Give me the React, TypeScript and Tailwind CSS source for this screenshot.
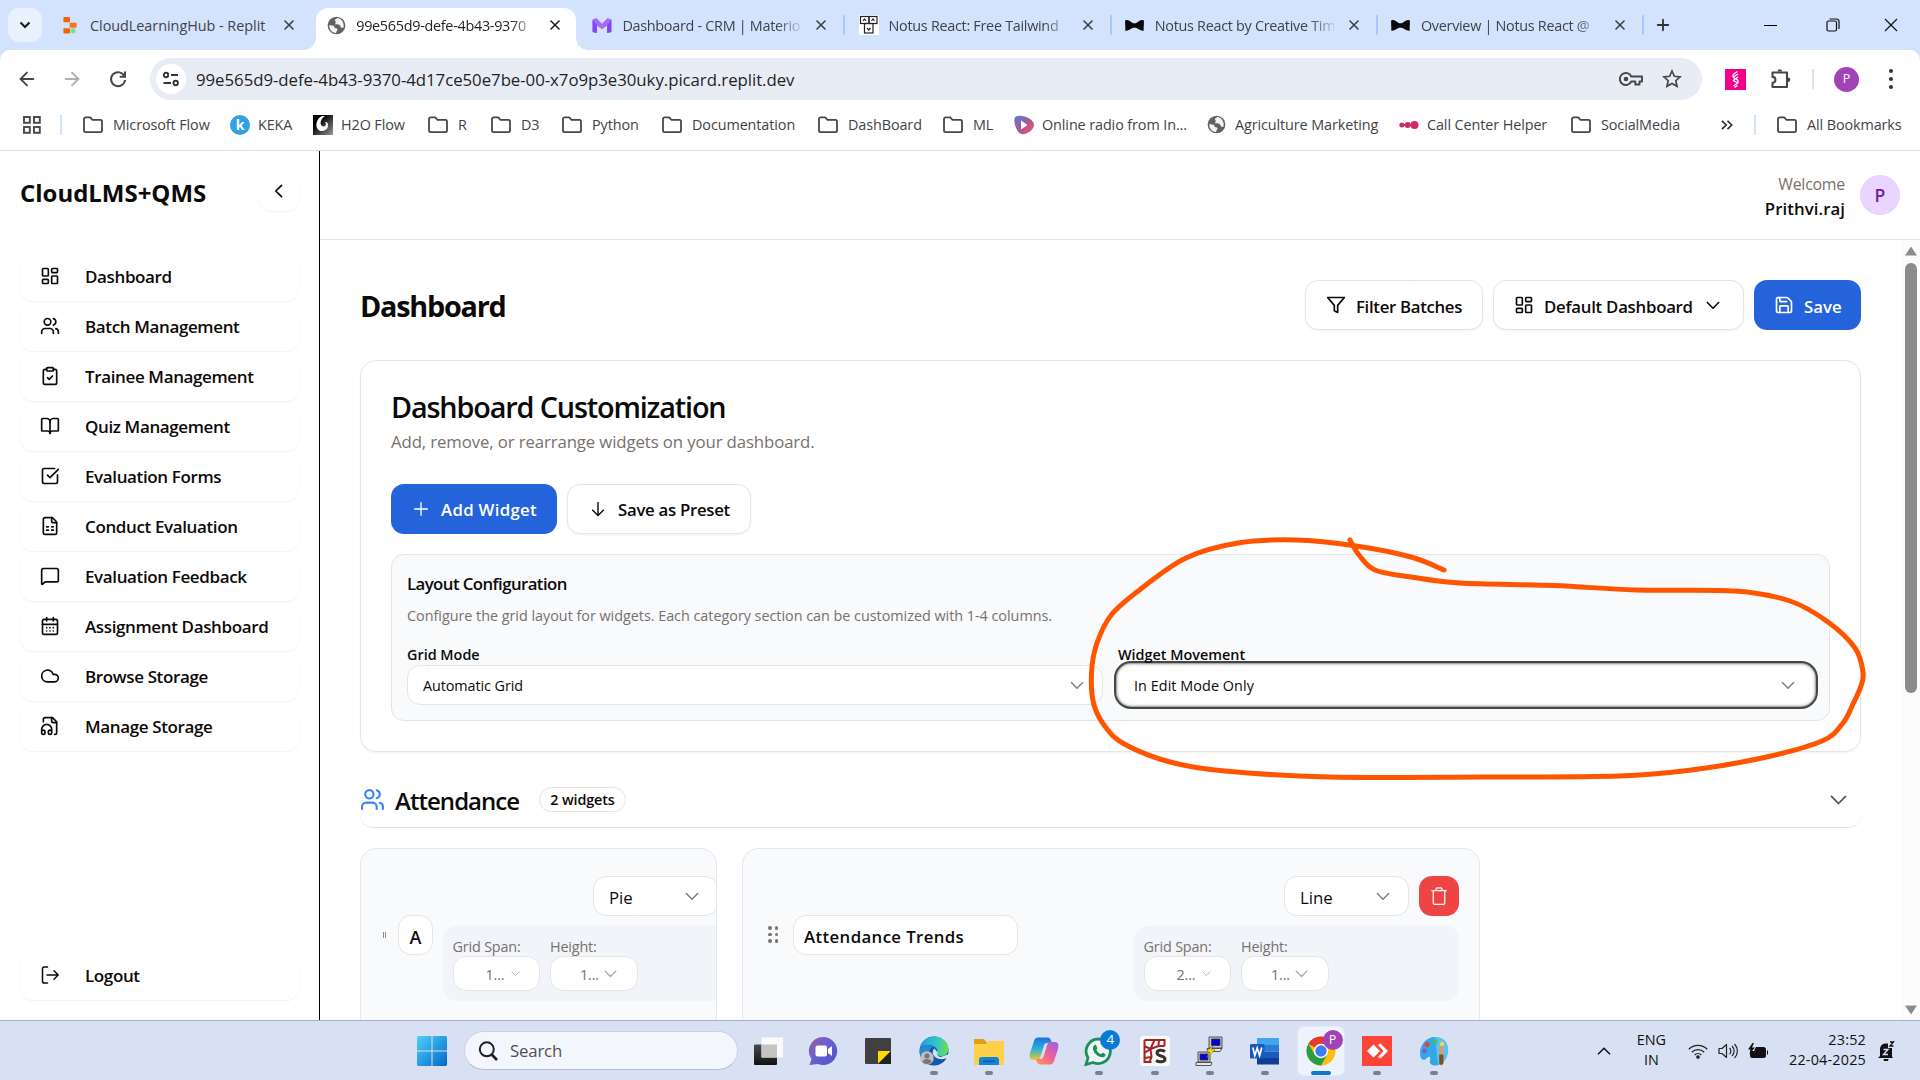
import React from "react";
import {
  ArrowLeft, ArrowRight, BookOpen, CalendarDays, ClipboardCheck, Cloud, FileSpreadsheet,
  LayoutDashboard, MessageSquare, SquareCheckBig, Users, X, Plus,
} from "lucide-react";

/* ---------- shared small icons ---------- */

const Chevron = ({ className = "" }: { className?: string }) => (
  <svg viewBox="0 0 15 15" fill="none" className={className}>
    <path d="M3.3 5.6L7.5 9.9l4.2-4.3" stroke="currentColor" strokeWidth="1.05" strokeLinecap="round" strokeLinejoin="round" />
  </svg>
);

const Folder = () => (
  <svg viewBox="0 0 22 20" className="h-5 w-[22px] shrink-0" fill="none" stroke="#474747" strokeWidth="1.8" strokeLinejoin="round">
    <path d="M2 15.5V4a1.6 1.6 0 0 1 1.6-1.6h4.6l2.3 2.4h7.9A1.6 1.6 0 0 1 20 6.400v9.100a1.600 1.600 0 0 1-1.600 1.600H3.600A1.600 1.600 0 0 1 2 15.500z" />
  </svg>
);

const Globe = ({ className = "" }: { className?: string }) => (
  <svg viewBox="0 0 20 20" className={className}>
    <circle cx="10" cy="10" r="9.300" fill="#5f6368" />
    <path d="M2.500 9.500l5 1 .6 2 2.400.6c1 .8.5 2-.6 3.200l-.4 1.600C5 17.500 2 14 2.500 9.500zM11.500 2.200C8.500 3 7.600 4.600 8.800 5.600c1.400.9-.6 2-.2 3.200 2 .6 4.600-.3 5.400 1.600.5 1.600 1.600 2.600 3.400 1.800C18.500 8 15.500 3.200 11.500 2.200z" fill="#fff" opacity=".92" />
  </svg>
);

const BowTie = () => (
  <svg viewBox="0 0 20 14" className="h-[13px] w-[19px]">
    <path d="M0 1.500C3 0 6 3.200 8.500 4.500h3C14 3.200 17 0 20 1.500c.5 3-.5 8 0 11-3 1-6-2-8.500-3h-3C6 10.500 3 13.500 0 12.500c.5-3-.5-8 0-11z" fill="#0a0a0a" />
  </svg>
);

/* ---------- browser chrome ---------- */

const Replit = () => (
  <svg viewBox="0 0 14 18" className="h-[17px] w-[14px]">
    <rect x="0" y="0" width="7" height="5.500" rx="1" fill="#f26207" />
    <rect x="6.500" y="6" width="7.500" height="5.500" rx="1" fill="#f97316" />
    <rect x="0" y="12" width="7" height="5.500" rx="1" fill="#f26207" />
    <circle cx="10.200" cy="14.500" r="2.700" fill="#6ee787" />
  </svg>
);

const Materio = () => (
  <svg viewBox="0 0 20 16" className="h-[15px] w-[20px]">
    <path d="M0 1.500L4 0l6 6 6-6 4 1.500V15l-4.500 1V8L10 12 4.500 8v8L0 15z" fill="#a56bff" />
    <path d="M0 1.500L4.500 8v8L0 15zM20 1.500L15.500 8v8l4.500-1z" fill="#8344f5" />
  </svg>
);

const Flowbox = () => (
  <svg viewBox="0 0 20 20" className="size-5 bg-white" fill="none" stroke="#222" strokeWidth="1.200">
    <rect x="1.500" y="1.500" width="8.500" height="7" /><rect x="10" y="1.500" width="8" height="7" />
    <rect x="5.500" y="8.500" width="8.500" height="9.500" />
    <path d="M4 6l1.500-2L7 6M12.500 6L14 4l1.500 2M8 13l1.800 2 1.700-2" />
  </svg>
);

type Tab = { label: string; icon: React.ReactNode; active?: boolean; sep?: boolean; cut?: boolean };
const tabs: Tab[] = [
  { label: "CloudLearningHub - Replit", icon: <Replit /> },
  { label: "99e565d9-defe-4b43-9370", icon: <Globe className="size-[19px]" />, active: true, cut: true },
  { label: "Dashboard - CRM | Materio", icon: <Materio />, sep: true, cut: true },
  { label: "Notus React: Free Tailwind", icon: <Flowbox />, sep: true, cut: true },
  { label: "Notus React by Creative Tim", icon: <BowTie />, sep: true, cut: true },
  { label: "Overview | Notus React @", icon: <BowTie />, sep: true, cut: true },
];

function TabStrip() {
  return (
    <div className="flex h-[50px] items-center bg-[#d3e2fd]">
      <div className="ml-2 mr-2 flex h-[34px] w-[34px] items-center justify-center rounded-[11px] bg-[#e9f0fe]">
        <svg viewBox="0 0 12 8" className="h-2 w-3"><path d="M1.500 1.500L6 6l4.500-4.500" fill="none" stroke="#1f1f1f" strokeWidth="2.200" /></svg>
      </div>
      {tabs.map((t) => (
        <div key={t.label} className="relative h-full w-[266.2px] shrink-0">
          {t.active && (
            <>
              <div className="absolute bottom-0 left-0 top-2 w-[260px] rounded-t-[12px] bg-white" />
              <div className="absolute -left-[12px] bottom-0 size-3 bg-[radial-gradient(circle_at_0_0,transparent_11.5px,#fff_12px)]" />
              <div className="absolute bottom-0 left-[260px] size-3 bg-[radial-gradient(circle_at_100%_0,transparent_11.5px,#fff_12px)]" />
            </>
          )}
          <div className="relative flex h-full items-center">
            <div className="ml-[10px] flex w-5 justify-center">{t.icon}</div>
            <div
              className={`ml-[10px] w-[179px] whitespace-nowrap pt-px text-[14.4px] ${t.active ? "text-[#1f1f1f]" : "text-[#3f4349]"} ${t.cut ? "tracking-[-0.02em] [mask-image:linear-gradient(to_right,#000_155px,rgba(0,0,0,0.15)_178px)]" : "tracking-[-0.002em]"}`}
            >
              {t.label}
            </div>
            <X className="ml-[12px] size-4" strokeWidth={2.4} color={t.active ? "#1f1f1f" : "#3c4043"} />
            {t.sep && <div className="ml-[14px] h-5 w-[2px] rounded bg-[#a8c7fa]" />}
          </div>
        </div>
      ))}
      <Plus className="ml-[7px] size-[18px]" strokeWidth={2.4} color="#333" />
      <div className="ml-auto flex items-center">
        <div className="mr-[49px] h-px w-[13px] bg-black" />
        <svg viewBox="0 0 14 14" className="mr-[44px] size-[14px]" fill="none" stroke="#111" strokeWidth="1.200">
          <rect x="1" y="3" width="9.500" height="10" rx="1.500" /><path d="M3.500 1h7a2.500 2.500 0 0 1 2.500 2.500v7.500" />
        </svg>
        <svg viewBox="0 0 14 14" className="mr-[22px] size-[14px]" stroke="#111" strokeWidth="1.200"><path d="M1 1l12 12M13 1L1 13" /></svg>
      </div>
    </div>
  );
}

function Toolbar() {
  return (
    <div className="h-[58px] bg-[#d3e2fd]">
      <div className="flex h-full items-center rounded-t-[10px] bg-white">
        <ArrowLeft className="ml-4 size-[22px]" strokeWidth={2} color="#474747" />
        <ArrowRight className="ml-[23px] size-[22px]" strokeWidth={2} color="#b0b0b0" />
        <svg viewBox="0 0 20 20" className="ml-[25px] size-5" fill="none" stroke="#474747" strokeWidth="2">
          <path d="M16.500 7.500A7 7 0 1 0 17 11" /><path d="M17 2.500v5.300h-5.300" />
        </svg>
        <div className="ml-[22px] flex h-[42px] w-[1552px] items-center rounded-full bg-[#e8ecf4]">
          <div className="ml-[6px] flex size-[30px] items-center justify-center rounded-full bg-white">
            <svg viewBox="0 0 18 16" className="h-4 w-[18px]" fill="none" stroke="#333" strokeWidth="1.900">
              <circle cx="4" cy="4" r="2.200" /><path d="M9 4h7M1.500 12H9" /><circle cx="13.700" cy="12" r="2.200" />
            </svg>
          </div>
          <div className="ml-[10px] pt-px text-[16.8px] tracking-[-0.002em] text-[#1f1f1f]">99e565d9-defe-4b43-9370-4d17ce50e7be-00-x7o9p3e30uky.picard.replit.dev</div>
          <svg viewBox="0 0 24 16" className="ml-auto h-4 w-6" fill="none" stroke="#474747" strokeWidth="1.900">
            <path d="M12.300 5.500A6 6 0 1 0 12.300 10.500h4v3h4.200v-3H23V5.500z" strokeLinejoin="round" />
            <circle cx="7" cy="8" r="2.300" fill="#474747" stroke="none" />
          </svg>
          <svg viewBox="0 0 20 20" className="ml-[19px] mr-5 size-5" fill="none" stroke="#474747" strokeWidth="1.700">
            <path d="M10 2l2.350 5.300 5.750.55-4.300 3.850 1.250 5.650L10 14.400l-5.050 2.950L6.200 11.700 1.900 7.850l5.750-.55z" />
          </svg>
        </div>
        <svg viewBox="0 0 21 21" className="ml-[23px] size-[21px] bg-[#f20089]" fill="none" stroke="#fff" strokeWidth="1.300">
          <path d="M12.500 2.500L8 5.500M13 5L8 8.200M8 8.200l5 3M8 5.500v2.700M13 8l-5 3.500M13 11.200v2.600L8.500 17M8 11.500l5 2.300M12.500 16.500L9.500 18.500" />
        </svg>
        <svg viewBox="0 0 22 22" className="ml-6 size-[22px]" fill="none" stroke="#474747" strokeWidth="2.100" strokeLinejoin="round">
          <path d="M2.500 4.500h14.500v14.500H2.500v-4.300a2.900 2.900 0 0 0 0-5.800z" />
          <path d="M7.500 3.500a2.300 2.300 0 0 1 4.600 0zM18 9.500a2.300 2.300 0 0 1 0 4.600z" fill="#474747" stroke="none" />
        </svg>
        <div className="ml-[20px] h-5 w-[2px] bg-[#d3e2fd]" />
        <div className="ml-[20px] flex size-[25px] items-center justify-center rounded-full bg-[#a142b8] text-[12.500px] text-white">P</div>
        <div className="ml-[30px] flex flex-col gap-[4px]">
          <i className="size-1 rounded-full bg-[#333]" /><i className="size-1 rounded-full bg-[#333]" /><i className="size-1 rounded-full bg-[#333]" />
        </div>
      </div>
    </div>
  );
}

const bookmarks: { label: string; w: string; icon?: React.ReactNode; tight?: boolean }[] = [
  { label: "Microsoft Flow", w: "w-[148px]" },
  { label: "KEKA", w: "w-[83px]", tight: true, icon: <span className="flex size-5 items-center justify-center rounded-full bg-[#339fe6] text-[14px] font-bold text-white">k</span> },
  {
    label: "H2O Flow", w: "w-[114px]", tight: true,
    icon: (
      <svg viewBox="0 0 20 20" className="size-5">
        <defs><linearGradient id="h2o" x1="0" y1="0" x2="1" y2="1"><stop offset=".3" stopColor="#000" /><stop offset="1" stopColor="#999" /></linearGradient></defs>
        <rect width="20" height="20" fill="url(#h2o)" />
        <path d="M9 1C3 4 2 11 5 14.500c3 3 9 1.500 10-3 .5-3-1-5-3-4.500 1.500 1.500 1 4.500-1.500 4.500C6 11 7 4 12 1z" fill="#fff" />
      </svg>
    ),
  },
  { label: "R", w: "w-[63px]" },
  { label: "D3", w: "w-[71px]" },
  { label: "Python", w: "w-[100px]" },
  { label: "Documentation", w: "w-[156px]" },
  { label: "DashBoard", w: "w-[125px]" },
  { label: "ML", w: "w-[72px]" },
  {
    label: "Online radio from In...", w: "w-[193px]", tight: true,
    icon: (
      <svg viewBox="0 0 20 20" className="size-5">
        <defs><linearGradient id="radio" x1="0" y1="0" x2="1" y2="1"><stop offset="0" stopColor="#4f7fe0" /><stop offset=".55" stopColor="#b3568f" /><stop offset="1" stopColor="#ff5470" /></linearGradient></defs>
        <path d="M2 1.500C8-1 20 4 20 10S10 21 6 18.500 -2 3.500 2 1.500z" fill="url(#radio)" /><path d="M7 5.500l6.500 4.500L7 14.500z" fill="#fff" />
      </svg>
    ),
  },
  { label: "Agriculture Marketing", w: "w-[192px]", tight: true, icon: <Globe className="mr-px size-[19px]" /> },
  {
    label: "Call Center Helper", w: "w-[171px]", tight: true,
    icon: <svg viewBox="0 0 20 10" className="h-[10px] w-5" fill="#cf2a63"><circle cx="2.800" cy="5" r="2.500" /><circle cx="8.700" cy="5" r="3" /><circle cx="15.500" cy="5" r="4" /><path d="M2 4h13v2H2z" /></svg>,
  },
  { label: "SocialMedia", w: "w-[146px]" },
];

function BookmarkBar() {
  return (
    <div className="flex h-[43px] items-start border-b border-[#dfdfdf] bg-white text-[14.4px] tracking-[-0.007em] text-[#3f4349]">
      <div className="flex h-[34px] w-full items-center">
        <svg viewBox="0 0 18 18" className="ml-[23px] size-[18px]" fill="none" stroke="#474747" strokeWidth="1.900">
          <rect x="1" y="1" width="5.800" height="5.800" /><rect x="11" y="1" width="5.800" height="5.800" /><rect x="1" y="11" width="5.800" height="5.800" /><rect x="11" y="11" width="5.800" height="5.800" />
        </svg>
        <div className="ml-[19px] mr-[20px] h-5 w-[2px] bg-[#d3e2fd]" />
        {bookmarks.map((b) => (
          <div key={b.label} className={`flex shrink-0 items-center whitespace-nowrap ${b.w}`}>
            {b.icon ?? <Folder />}
            <span className={b.tight ? "ml-2" : "ml-[9px]"}>{b.label}</span>
          </div>
        ))}
        <svg viewBox="0 0 12 10" className="ml-[5px] h-[10px] w-3" fill="none" stroke="#333" strokeWidth="1.700"><path d="M1 .8L5.200 5 1 9.200M6.500.8L10.700 5 6.500 9.200" /></svg>
        <div className="ml-[21px] mr-[20px] h-5 w-[2px] bg-[#d3e2fd]" />
        <Folder /><span className="ml-[9px] whitespace-nowrap">All Bookmarks</span>
      </div>
    </div>
  );
}

/* ---------- sidebar ---------- */

const StorageIcon = () => (
  <svg viewBox="0 0 24 24" className="size-5" fill="none" stroke="currentColor" strokeWidth="2" strokeLinecap="round" strokeLinejoin="round">
    <path d="M17.500 22h.5a2 2 0 0 0 2-2V7l-5-5H6a2 2 0 0 0-2 2v3" /><path d="M14 2v4a2 2 0 0 0 2 2h4" />
    <path d="M2 19a2 2 0 1 1 4 0v1a2 2 0 1 1-4 0v-4a6 6 0 0 1 12 0v4a2 2 0 1 1-4 0v-1a2 2 0 1 1 4 0" />
  </svg>
);

const LogoutIcon = () => (
  <svg viewBox="0 0 20 20" className="size-5" fill="none" stroke="currentColor" strokeWidth="1.500" strokeLinecap="round" strokeLinejoin="round">
    <path d="M7.500 2H4.300A1.800 1.800 0 0 0 2.500 3.800v12.400A1.800 1.800 0 0 0 4.300 18h3.200M7 10h11M14 5.800l4.200 4.200L14 14.200" />
  </svg>
);

const nav: [string, React.ReactNode][] = [
  ["Dashboard", <LayoutDashboard className="size-5" />],
  ["Batch Management", <Users className="size-5" />],
  ["Trainee Management", <ClipboardCheck className="size-5" />],
  ["Quiz Management", <BookOpen className="size-5" />],
  ["Evaluation Forms", <SquareCheckBig className="size-5" />],
  ["Conduct Evaluation", <FileSpreadsheet className="size-5" />],
  ["Evaluation Feedback", <MessageSquare className="size-5" />],
  ["Assignment Dashboard", <CalendarDays className="size-5" />],
  ["Browse Storage", <Cloud className="size-5" />],
  ["Manage Storage", <StorageIcon />],
];

const NavItem = ({ label, icon }: { label: string; icon: React.ReactNode }) => (
  <div className="flex h-[50px] items-center rounded-[13px] pl-5 shadow-[0_1px_2px_rgba(0,0,0,0.06)]">
    {icon}
    <span className="ml-[25px] pt-[2px] text-[17px] font-semibold tracking-[-0.022em]">{label}</span>
  </div>
);

function Sidebar() {
  return (
    <aside className="flex h-full w-80 shrink-0 flex-col border-r border-black px-5 pb-5 pt-5">
      <div className="flex h-10 items-center justify-between">
        <span className="pt-[3px] text-[24px] font-bold tracking-[-0.001em]">CloudLMS+QMS</span>
        <div className="flex size-10 items-center justify-center rounded-[13px] shadow-[0_1px_2px_rgba(0,0,0,0.06)]">
          <Chevron className="size-5 rotate-90 [&_path]:[stroke-width:1.3]" />
        </div>
      </div>
      <nav className="mt-10">{nav.map(([l, i]) => <NavItem key={l} label={l} icon={i} />)}</nav>
      <div className="mt-auto"><NavItem label="Logout" icon={<LogoutIcon />} /></div>
    </aside>
  );
}

/* ---------- page content ---------- */

const Btn = ({ children, className = "" }: { children: React.ReactNode; className?: string }) => (
  <div className={`flex h-[50px] items-center rounded-[13px] text-[16.8px] font-semibold ${className}`}>{children}</div>
);
const outline = "border border-[#e7e5e4] bg-white shadow-[0_1px_2px_rgba(0,0,0,0.05)]";
const GridIcon = () => <LayoutDashboard className="size-5" />;

function Configuration() {
  return (
    <section className="mt-[30px] h-[392px] rounded-[16px] border border-[#e7e5e4] px-[30px] pt-[30px] shadow-[0_1px_2px_rgba(0,0,0,0.05)]">
      <h2 className="text-[28.8px] font-semibold leading-8 tracking-[-0.04em]">Dashboard Customization</h2>
      <p className="mt-[6px] text-[16.8px] leading-[25px] tracking-[-0.007em] text-[#78716c]">Add, remove, or rearrange widgets on your dashboard.</p>
      <div className="mt-[30px] flex gap-[10px]">
        <Btn className="w-[166px] bg-[#2563db] pl-5 tracking-[0.018em] text-white">
          <svg viewBox="0 0 20 20" className="size-5" stroke="currentColor" strokeWidth="1.400"><path d="M10 3.200v13.600M3.200 10h13.600" /></svg>
          <span className="ml-[10px] pt-[2px]">Add Widget</span>
        </Btn>
        <Btn className={`w-[184px] pl-5 tracking-[-0.017em] ${outline}`}>
          <svg viewBox="0 0 20 20" className="size-5" fill="none" stroke="currentColor" strokeWidth="1.400"><path d="M10 3v13.500M4.200 10.700l5.800 5.800 5.800-5.800" /></svg>
          <span className="ml-[10px] pt-[2px]">Save as Preset</span>
        </Btn>
      </div>
      <div className="mt-5 rounded-[13px] border border-[#e7e5e4] bg-[#f8fafc] px-[15px] pb-[15px] pt-4">
        <h3 className="text-[16.8px] font-semibold leading-[25px] tracking-[-0.034em]">Layout Configuration</h3>
        <p className="mt-[10px] text-[14.4px] leading-5 tracking-[-0.002em] text-[#78716c]">
          Configure the grid layout for widgets. Each category section can be customized with 1-4 columns.
        </p>
        <div className="mt-[19px] grid grid-cols-2 gap-[15px] text-[14.4px]">
          <div>
            <div className="font-semibold leading-5">Grid Mode</div>
            <div className="flex h-10 items-center justify-between rounded-[13px] border border-[#e7e5e4] bg-white px-[15px]">
              <span className="pt-[2px] tracking-[-0.006em]">Automatic Grid</span><Chevron className="size-5 text-[#7d7d7d]" />
            </div>
          </div>
          <div>
            <div className="font-semibold leading-5">Widget Movement</div>
            <div className="flex h-10 items-center justify-between rounded-[13px] bg-white px-4 shadow-[inset_0_0_2px_1px_#eee,0_0_0_1px_#dcdcdc,0_0_0_2px_#a9a9a9,0_0_0_4px_#444745]">
              <span className="pt-[2px] tracking-[0.004em]">In Edit Mode Only</span><Chevron className="size-5 text-[#7d7d7d]" />
            </div>
          </div>
        </div>
      </div>
    </section>
  );
}

const MiniSelect = ({ label, value, small }: { label: string; value: string; small?: boolean }) => (
  <div className="w-[87.5px] text-[14.4px] tracking-[-0.012em] text-[#78716c]">
    <div className="relative top-px whitespace-nowrap leading-5">{label}</div>
    <div className="flex h-[35px] items-center rounded-[13px] border border-[#e7e5e4] bg-white">
      <span className={small ? "ml-[32px] pt-[2px]" : "ml-[29px] pt-[2px]"}>{value}</span>
      <Chevron className={small ? "ml-[5px] size-[13px] text-[#b5b2b0]" : "ml-[2px] size-[19px] text-[#a8a5a3]"} />
    </div>
  </div>
);

const WidgetControls = ({ span }: { span: string }) => (
  <div className="mt-[10px] flex h-[75px] w-[325px] gap-[10px] rounded-[13px] bg-[#f1f5f9] pl-[9.5px] pt-[10px]">
    <MiniSelect label="Grid Span:" value={span} small />
    <MiniSelect label="Height:" value="1..." />
  </div>
);

const TypeSelect = ({ value }: { value: string }) => (
  <div className="flex h-10 w-[125px] items-center justify-between rounded-[13px] border border-[#e7e5e4] bg-white px-[15px] text-[16.8px]">
    <span className="pt-[3px]">{value}</span><Chevron className="size-5 text-[#7d7d7d]" />
  </div>
);

function Widgets() {
  return (
    <div className="mt-5 flex gap-[25px]">
      <div className="flex h-[400px] w-[357px] items-start overflow-hidden rounded-[16px] border border-[#e2e8f0] bg-[#f8fafc] pt-[27px]">
        <div className="ml-[22px] mt-[56px] flex gap-px"><i className="h-[6px] w-px bg-[#8f8b88]" /><i className="h-[6px] w-px bg-[#8f8b88]" /></div>
        <div className="ml-[12px] mt-[39px] flex h-10 w-[35px] shrink-0 items-center justify-center rounded-[13px] border border-[#e7e5e4] bg-white pt-[4px] text-[18px] font-semibold">A</div>
        <div className="ml-[10px] shrink-0">
          <div className="pl-[150px]"><TypeSelect value="Pie" /></div>
          <WidgetControls span="1..." />
        </div>
      </div>
      <div className="flex h-[400px] w-[738px] items-start rounded-[16px] border border-[#e2e8f0] bg-[#f8fafc] pr-5 pt-[27px]">
        <div className="ml-[25px] mt-[50px] grid grid-cols-2 gap-x-[3px] gap-y-[3px]">
          {[0, 1, 2, 3, 4, 5].map((i) => <i key={i} className="size-[3.500px] rounded-full bg-[#78716c]" />)}
        </div>
        <div className="ml-[15px] mt-[39px] flex h-10 w-[225px] items-center rounded-[13px] border border-[#e7e5e4] bg-white pl-[10px] pt-[3px] text-[16.8px] font-semibold tracking-[0.023em]">Attendance Trends</div>
        <div className="ml-auto">
          <div className="flex justify-end gap-[10px]">
            <TypeSelect value="Line" />
            <div className="flex size-10 items-center justify-center rounded-[13px] bg-[#ef4444]">
              <svg viewBox="0 0 20 20" className="size-5" fill="none" stroke="#fff" strokeWidth="1.300" strokeLinecap="round" strokeLinejoin="round">
                <path d="M2.800 4.700h14.400M7 4.500V3a1.200 1.200 0 0 1 1.200-1.200h3.600A1.200 1.200 0 0 1 13 3v1.500M4.300 4.900v12a1.500 1.500 0 0 0 1.500 1.500h8.400a1.500 1.500 0 0 0 1.500-1.500v-12" />
              </svg>
            </div>
          </div>
          <WidgetControls span="2..." />
        </div>
      </div>
    </div>
  );
}

function Content() {
  return (
    <div className="flex min-h-0 flex-1 overflow-hidden">
      <main className="min-w-0 flex-1 px-10 pt-10">
        <div className="flex items-center">
          <h1 className="mr-auto pt-[2px] text-[28.8px] font-bold tracking-[-0.043em]">Dashboard</h1>
          <Btn className={`mr-[10px] w-[178px] pl-5 tracking-[-0.019em] ${outline}`}>
            <svg viewBox="0 0 24 24" className="size-5" fill="none" stroke="currentColor" strokeWidth="2" strokeLinejoin="round"><path d="M22 3H2l8 9.460V19l4 2v-8.540z" /></svg>
            <span className="ml-[10px] pt-[3px]">Filter Batches</span>
          </Btn>
          <Btn className={`mr-[10px] w-[251px] pl-5 tracking-[-0.015em] ${outline}`}>
            <GridIcon /><span className="ml-[10px] pt-[3px]">Default Dashboard</span><Chevron className="ml-[10px] size-5 [&_path]:[stroke-width:1.2]" />
          </Btn>
          <Btn className="w-[107px] bg-[#2563db] pl-5 text-white">
            <svg viewBox="0 0 24 24" className="size-5" fill="none" stroke="currentColor" strokeWidth="2" strokeLinecap="round" strokeLinejoin="round">
              <path d="M15.200 3a2 2 0 0 1 1.400.6l3.800 3.800a2 2 0 0 1 .6 1.400V19a2 2 0 0 1-2 2H5a2 2 0 0 1-2-2V5a2 2 0 0 1 2-2z" /><path d="M17 21v-7a1 1 0 0 0-1-1H8a1 1 0 0 0-1 1v7M7 3v4a1 1 0 0 0 1 1h7" />
            </svg>
            <span className="ml-[10px] pt-[3px]">Save</span>
          </Btn>
        </div>
        <Configuration />
        <div className="mt-5 flex h-[56px] items-center rounded-[13px] border-b border-[#e7e5e4]">
          <Users className="size-[25px] text-[#3b82f6]" />
          <h2 className="ml-[10px] w-[134px] pt-[3px] text-[24px] font-semibold tracking-[-0.04em]">Attendance</h2>
          <span className="ml-[10px] flex h-[25px] w-[87px] items-center justify-center rounded-full border border-[#e7e5e4] text-[14.4px] font-semibold tracking-[-0.01em]">2 widgets</span>
          <Chevron className="ml-auto mr-[10px] size-[25px] text-[#57534e]" />
        </div>
        <Widgets />
      </main>
      <div className="flex w-[19px] flex-col items-center justify-between bg-[#fcfcfc] pb-[5px] pt-[6px]">
        <div>
          <svg viewBox="0 0 12 10" className="h-[10px] w-3" fill="#8b8b8b"><path d="M6 0.500L12 9.500H0z" /></svg>
          <div className="mt-[7px] h-[430px] w-3 rounded-full bg-[#8b8b8b]" />
        </div>
        <svg viewBox="0 0 12 10" className="h-[10px] w-3" fill="#8b8b8b"><path d="M6 9.500L0 .5h12z" /></svg>
      </div>
    </div>
  );
}

/* ---------- freehand annotation ---------- */

const stroke: [number, number][] = [
  [1444, 570], [1411, 557], [1356, 546], [1296, 540], [1238, 543], [1186, 558], [1142, 588], [1112, 614], [1097, 643], [1091.500, 673],
  [1094, 705], [1107, 729], [1126, 745], [1170, 762], [1225, 771], [1329, 777], [1480, 777], [1619, 776], [1691, 770], [1762, 758],
  [1822, 741], [1843, 723], [1853, 704], [1861, 686], [1863, 672], [1855, 648], [1828, 622], [1790, 601], [1735, 591], [1636, 590],
  [1554, 585.500], [1460, 583], [1411, 577], [1375, 570], [1359, 555], [1350, 540],
];

function smooth(p: [number, number][]) {
  let d = `M${p[0][0]} ${p[0][1]}`;
  for (let i = 0; i < p.length - 1; i++) {
    const a = p[Math.max(i - 1, 0)], b = p[i], c = p[i + 1], e = p[Math.min(i + 2, p.length - 1)];
    d += `C${b[0] + (c[0] - a[0]) / 6} ${b[1] + (c[1] - a[1]) / 6} ${c[0] - (e[0] - b[0]) / 6} ${c[1] - (e[1] - b[1]) / 6} ${c[0]} ${c[1]}`;
  }
  return d;
}

/* ---------- taskbar ---------- */

const I = ({ children }: { children: React.ReactNode }) => <svg viewBox="0 0 30 30" className="size-[30px]">{children}</svg>;

const apps: { name: string; dot?: boolean; icon: React.ReactNode }[] = [
  { name: "taskview", icon: <I><defs><linearGradient id="tv" x1="0" y1="0" x2="0" y2="1"><stop stopColor="#4a4a4a" /><stop offset="1" stopColor="#111" /></linearGradient></defs><rect x="1" y="8.500" width="23" height="20.500" rx="1" fill="url(#tv)" /><rect x="8.500" y="1.500" width="22" height="20" rx="1" fill="#fafafa" /><path d="M8.500 8.500H24v13H8.500z" fill="#c4c4c4" /></I> },
  { name: "chat", icon: <I><defs><linearGradient id="ch" x1="0" y1="0" x2="1" y2="1"><stop stopColor="#9a5aa0" /><stop offset=".45" stopColor="#6a62cf" /><stop offset="1" stopColor="#4a52c8" /></linearGradient></defs><path d="M15 1a14 14 0 1 1-5 27l-8.500 1L3.500 23A14 14 0 0 1 15 1z" fill="url(#ch)" /><rect x="7.500" y="9.500" width="11.500" height="11" rx="2" fill="#fff" /><path d="M20 13l4-3v10l-4-3z" fill="#fff" /></I> },
  { name: "notes", icon: <I><rect x="2" y="2" width="26" height="26" rx="1" fill="#404040" /><path d="M15 28V15h13z" fill="#ffd60a" /><path d="M15 28L28 15v13z" fill="#222" /></I> },
  { name: "edge", dot: true, icon: <I><defs><linearGradient id="eg" x1="0" y1=".3" x2="1" y2=".4"><stop stopColor="#1c9fe0" /><stop offset=".55" stopColor="#2fc2d0" /><stop offset="1" stopColor="#6ae04d" /></linearGradient></defs><circle cx="15" cy="15" r="14.500" fill="#0f5ba8" /><path d="M1 12C3 4 9 .5 15 .5c9 0 14.500 6.500 14.500 12 0 5-3.500 7.500-7.500 7.500-3 0-5-1-4.500-3 .8-1.500 1-2 .5-3.500C16.500 9.500 6 6.500 1 12z" fill="url(#eg)" /><path d="M15.500 12.500c-3 2-2.500 9 5 10.500 3 .5 6-.5 9.500-1v-4l-8.500 3c-3-.5-4-3-3-4.500z" fill="#d8e1f3" /><path d="M.8 13C5 7.500 11 8.500 14 11c-4 1.500-5 7-3 11l-8 1C1 20 .5 16 .8 13z" fill="#2b86d8" /><circle cx="8" cy="22" r="6.800" fill="#bdbdbd" /><circle cx="8" cy="20" r="2.500" fill="#777" /><path d="M3.500 26c1-4 8-4 9 0-2 2.500-7 2.500-9 0z" fill="#777" /></I> },
  { name: "files", dot: true, icon: <I><path d="M0 3h10l3 4h17v8H0z" fill="#e0a011" /><path d="M0 8h12l3-3h15v24H0z" fill="#ffcf48" /><path d="M5 29v-5a3 3 0 0 1 3-3h14a3 3 0 0 1 3 3v5z" fill="#1583d3" /><path d="M9 24.500h12v1.600H9z" fill="#0b5ea8" /></I> },
  { name: "copilot", icon: <I><defs><linearGradient id="c1" x1="0" y1="0" x2="0" y2="1"><stop stopColor="#1d6fe0" /><stop offset=".5" stopColor="#23b5d8" /><stop offset="1" stopColor="#f4c430" /></linearGradient><linearGradient id="c2" x1="1" y1="0" x2="0" y2="1"><stop stopColor="#9b5bf0" /><stop offset=".5" stopColor="#f0609a" /><stop offset="1" stopColor="#ff9a4a" /></linearGradient></defs><path d="M9 1.500h9c3 0 4 2 5 5.500h-5c-2 0-3 2-3.500 4L11.500 21c-.6 2-2 3-4 3H4c-3 0-4-3-3-7L5 5c.6-2 2-3.500 4-3.500z" fill="url(#c1)" /><path d="M21 28.500h-9c-3 0-4-2-5-5.500h4.500c2 0 3-2 3.500-4l3-10c.6-2 2-3 4-3h4c3 0 4 3 3 7l-4 12c-.6 2-2 3.500-4 3.500z" fill="url(#c2)" /></I> },
  { name: "whatsapp", dot: true, icon: <div className="relative"><I><path d="M14.500 3A12.300 12.300 0 1 1 9 26.500L2 28.500l2-6.700A12.300 12.300 0 0 1 14.500 3z" fill="#eef7f2" stroke="#1d8f5a" strokeWidth="2.800" /><path d="M10 9.500c1-1 2-.8 2.500.4l.8 2c.3.8-.9 1.500-.9 2 1 2 2.500 3.300 4.500 4.200.7 0 1.300-1.600 2-1.400l2.400 1.200c.8.6-.3 3-1.800 3.400-5 .8-11-5-10.600-9.500.1-1 .5-1.700 1.100-2.300z" fill="#1d8f5a" /></I><span className="absolute -right-[6px] -top-[6px] flex size-5 items-center justify-center rounded-full bg-[#0a7ad6] text-[13.500px] text-white">4</span></div> },
  { name: "s", dot: true, icon: <I><rect x="0" y="0" width="30" height="30" rx="3.500" fill="#fbfaf9" /><path d="M4.500 4h20v6M4.500 4v22h7M4.500 10l6 3 4-9M4.500 17l6-4 8-3 6 0M10.500 13l1 8-2 5M19 4l-.5 6M4.500 22l7-1" fill="none" stroke="#a32424" strokeWidth="2" /><path d="M25 15.500c-2.500-1.800-8-2-8 1.500s8 2.500 8 6-6 3.500-9 1.500" fill="none" stroke="#333" strokeWidth="3" /></I> },
  { name: "putty", dot: true, icon: <I><g stroke="#333" strokeWidth=".8"><path d="M14 1h13v11H14zM3 16h12v10H3z" fill="#c9c9c9" /><path d="M16.500 3h8.500v6.500h-8.500zM5 18h8v6H5z" fill="#0000e0" /><path d="M12 12.500h15l-2 3H13zM1 26.500h16l-1 3H1z" fill="#e5e5e5" /></g><path d="M19 9l-8 7h4l-4 6 9-8h-4z" fill="#ffee00" stroke="#554b00" strokeWidth=".5" /></I> },
  { name: "word", dot: true, icon: <I><path d="M7 2h22v7H7z" fill="#41a5ee" /><path d="M7 9h22v6.500H7z" fill="#2b7cd3" /><path d="M7 15.500h22V22H7z" fill="#185abd" /><path d="M7 22h22v6.500H7z" fill="#103f91" /><rect x="0" y="8" width="14.500" height="14.500" rx="1.200" fill="#185abd" /><path d="M2.800 11.500l2 8 2.400-7.500 2.400 7.500 2.200-8" fill="none" stroke="#fff" strokeWidth="1.700" /></I> },
  { name: "chrome", icon: <div className="relative flex h-[48px] w-[46px] items-center justify-center rounded-[6px] bg-[#eef2fb] shadow-[0_0_0_1px_#e3e9f6]"><I><circle cx="15" cy="15" r="14.500" fill="#fbbf12" /><path d="M15 15L2.400 7.800A14.500 14.500 0 0 1 27.600 7.800H15z" fill="#e33b2e" /><path d="M2.400 7.800A14.500 14.500 0 0 0 15 29.500l6.300-10.900L15 15 8.700 18.600z" fill="#2a9d4a" /><circle cx="15" cy="15" r="7.200" fill="#fff" /><circle cx="15" cy="15" r="5.700" fill="#3b7ded" /></I><span className="absolute right-[1px] top-[3px] flex size-5 items-center justify-center rounded-full bg-[#a142b8] text-[12px] text-white">P</span></div> },
  { name: "anydesk", dot: true, icon: <I><path d="M0 0h30v30H0z" fill="#fc4438" /><path d="M11.500 8.500L18 15l-6.500 6.500L5 15zM16 9l2.500-1.500L26 15l-7.500 7.500L16 21l5.500-6z" fill="#fff" /></I> },
  { name: "paint", dot: true, icon: <I><path d="M16 1C7 1 1 9 1 17c0 8 5 8 7 5 2-2.500 4-1 3 2-1 3 1 5.500 5 5.500C24 29.500 29 22 29 14S24 1 16 1z" fill="#35a7e8" /><path d="M16 1c5 0 13 3 13 13 0 8-5 14-10 15z" fill="#5cc4f2" /><circle cx="16" cy="5.500" r="2.500" fill="#46c05a" /><circle cx="8" cy="8.500" r="2.500" fill="#d9482f" /><circle cx="5.500" cy="15" r="2.300" fill="#8a4fc9" /><circle cx="23" cy="8" r="2.200" fill="#ffd34a" /><path d="M20 10.500h4.500l-.3 9h-3.900z" fill="#d9a066" /><path d="M20.200 18.500h4.200v9l-2.100 2-2.100-2z" fill="#8a4b20" /></I> },
];

function Taskbar() {
  return (
    <footer className="flex h-[60px] items-center border-t border-[#a9b0c3] bg-[#d8e1f3]">
      <svg viewBox="0 0 30 30" className="ml-[417px] size-[30px]">
        <defs><linearGradient id="win" x1="0" y1="0" x2="1" y2="1"><stop stopColor="#4fd0fb" /><stop offset="1" stopColor="#0069c8" /></linearGradient></defs>
        <path d="M1 0h13.500v14.500H0V1zM15.500 0H29l1 1v13.500H15.500zM0 15.500h14.500V30H1l-1-1zM15.500 15.500H30V29l-1 1H15.500z" fill="url(#win)" />
      </svg>
      <div className="ml-[17px] flex h-[39px] w-[274px] items-center rounded-full border border-[#c9d2e8] border-b-[#b3bcd2] bg-[#f3f6fc]">
        <svg viewBox="0 0 20 20" className="ml-[13px] size-5" fill="none" stroke="#1f1f1f" strokeWidth="2"><circle cx="8.800" cy="8.300" r="7" /><path d="M13.700 13.500l5.300 5.500" strokeWidth="2.600" /></svg>
        <span className="ml-[12px] pt-px text-[16.8px] tracking-[-0.011em] text-[#505050]">Search</span>
      </div>
      <div className="ml-[2px] flex h-full">
        {apps.map((a) => (
          <div key={a.name} className={`relative flex h-full items-center justify-center ${a.name === "anydesk" ? "w-[58px]" : "w-[55.3px]"}`}>
            {a.icon}
            {a.dot && <i className="absolute bottom-[5px] h-1 w-[8px] rounded-full bg-[#7b7f8a]" />}
            {a.name === "chrome" && <i className="absolute bottom-[5px] h-1 w-5 rounded-full bg-[#0a7ad6]" />}
          </div>
        ))}
      </div>
      <svg viewBox="0 0 14 8" className="ml-auto mr-[26px] h-2 w-[14px]" fill="none" stroke="#111" strokeWidth="1.500"><path d="M1 7.200L7 1.200l6 6" /></svg>
      <div className="mr-[22px] pb-px text-center text-[14.4px] leading-5 text-[#111]">ENG<br />IN</div>
      <svg viewBox="0 0 20 16" className="mr-[10px] h-4 w-5" fill="none" stroke="#222" strokeWidth="1.300">
        <path d="M.8 6.200a13 13 0 0 1 18.400 0M3.800 9.200a8.800 8.800 0 0 1 12.400 0M6.700 12a4.700 4.700 0 0 1 6.600 0" /><circle cx="10" cy="14" r="1.200" fill="#222" />
      </svg>
      <svg viewBox="0 0 20 16" className="mr-[10px] h-4 w-5" fill="none" stroke="#222" strokeWidth="1.200" strokeLinejoin="round">
        <path d="M1 5.500h3L8.500 1.500v13L4 10.500H1zM11.500 5a4 4 0 0 1 0 6M14 3a7 7 0 0 1 0 10M16.500 1a10 10 0 0 1 0 14" />
      </svg>
      <svg viewBox="0 0 20 16" className="mr-[21px] h-4 w-5" fill="#111">
        <path d="M2 8v4.500A2.500 2.500 0 0 0 4.500 15h11a2.500 2.500 0 0 0 2.500-2.500v-6A2.500 2.500 0 0 0 15.500 4H8L6 8z" /><path d="M19 7.500h1v4h-1z" /><path d="M4.500 0L0 6.500h2.500L1.500 11 7 4.500H4L6 0z" />
      </svg>
      <div className="pb-px text-right text-[14.4px] leading-5 tracking-[0.013em] text-[#111]">23:52<br />22-04-2025</div>
      <svg viewBox="0 0 18 20" className="ml-[11px] mr-[25px] h-5 w-[18px]" fill="#111">
        <path d="M3 8a5.500 5.500 0 0 1 5-5.500h3V7h4v8.500l1 1.500H1l2-2zM6.500 18h5a2.500 2.500 0 0 1-5 0z" /><path d="M6.500 8.500H11l-4.500 5H11" fill="none" stroke="#d8e1f3" strokeWidth="1.400" /><path d="M13 1h3.500L13 5h3.500" fill="none" stroke="#111" strokeWidth="1.300" />
      </svg>
    </footer>
  );
}

export default function App() {
  return (
    <div className="relative flex h-[1080px] w-[1920px] flex-col overflow-hidden bg-white font-['Open_Sans',sans-serif] text-[#0c0a09]">
      <TabStrip />
      <Toolbar />
      <BookmarkBar />
      <div className="flex min-h-0 flex-1">
        <Sidebar />
        <div className="flex min-w-0 flex-1 flex-col">
          <header className="flex h-[89px] shrink-0 items-center justify-end border-b border-[#e5e5e5] pr-5">
            <div className="pt-[2px] text-right text-[16.8px] leading-[25px]">
              <div className="text-[15.900px] tracking-[-0.015em] text-[#78716c]">Welcome</div>
              <div className="-mt-px font-semibold tracking-[0.004em]">Prithvi.raj</div>
            </div>
            <div className="ml-[15px] flex size-10 items-center justify-center rounded-full bg-[#e9d5ff] pt-px text-[17.5px] font-semibold text-[#6b21a8]">P</div>
          </header>
          <Content />
        </div>
      </div>
      <Taskbar />
      <svg viewBox="0 0 1920 1080" className="pointer-events-none absolute inset-0" fill="none">
        <path d={smooth(stroke)} stroke="#ff5500" strokeWidth="5" strokeLinecap="round" strokeLinejoin="round" />
      </svg>
    </div>
  );
}
